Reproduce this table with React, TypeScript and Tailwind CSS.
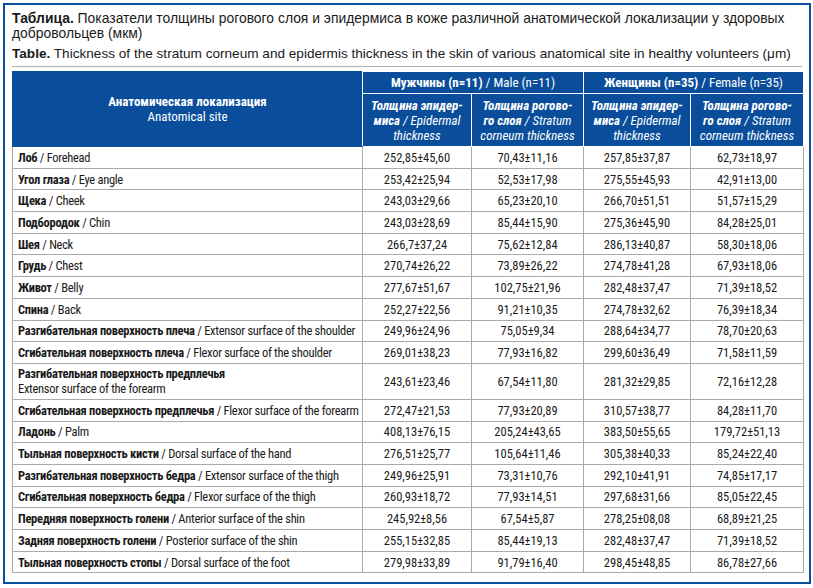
const rows: [string, string, string[]][] = [
  ['Лоб', 'Forehead', ['252,85±45,60', '70,43±11,16', '257,85±37,87', '62,73±18,97']],
  ['Угол глаза', 'Eye angle', ['253,42±25,94', '52,53±17,98', '275,55±45,93', '42,91±13,00']],
  ['Щека', 'Cheek', ['243,03±29,66', '65,23±20,10', '266,70±51,51', '51,57±15,29']],
  ['Подбородок', 'Chin', ['243,03±28,69', '85,44±15,90', '275,36±45,90', '84,28±25,01']],
  ['Шея', 'Neck', ['266,7±37,24', '75,62±12,84', '286,13±40,87', '58,30±18,06']],
  ['Грудь', 'Chest', ['270,74±26,22', '73,89±26,22', '274,78±41,28', '67,93±18,06']],
  ['Живот', 'Belly', ['277,67±51,67', '102,75±21,96', '282,48±37,47', '71,39±18,52']],
  ['Спина', 'Back', ['252,27±22,56', '91,21±10,35', '274,78±32,62', '76,39±18,34']],
  ['Разгибательная поверхность плеча', 'Extensor surface of the shoulder', ['249,96±24,96', '75,05±9,34', '288,64±34,77', '78,70±20,63']],
  ['Сгибательная поверхность плеча', 'Flexor surface of the shoulder', ['269,01±38,23', '77,93±16,82', '299,60±36,49', '71,58±11,59']],
  ['Разгибательная поверхность предплечья', 'Extensor surface of the forearm', ['243,61±23,46', '67,54±11,80', '281,32±29,85', '72,16±12,28']],
  ['Сгибательная поверхность предплечья', 'Flexor surface of the forearm', ['272,47±21,53', '77,93±20,89', '310,57±38,77', '84,28±11,70']],
  ['Ладонь', 'Palm', ['408,13±76,15', '205,24±43,65', '383,50±55,65', '179,72±51,13']],
  ['Тыльная поверхность кисти', 'Dorsal surface of the hand', ['276,51±25,77', '105,64±11,46', '305,38±40,33', '85,24±22,40']],
  ['Разгибательная поверхность бедра', 'Extensor surface of the thigh', ['249,96±25,91', '73,31±10,76', '292,10±41,91', '74,85±17,17']],
  ['Сгибательная поверхность бедра', 'Flexor surface of the thigh', ['260,93±18,72', '77,93±14,51', '297,68±31,66', '85,05±22,45']],
  ['Передняя поверхность голени', 'Anterior surface of the shin', ['245,92±8,56', '67,54±5,87', '278,25±08,08', '68,89±21,25']],
  ['Задняя поверхность голени', 'Posterior surface of the shin', ['255,15±32,85', '85,44±19,13', '282,48±37,47', '71,39±18,52']],
  ['Тыльная поверхность стопы', 'Dorsal surface of the foot', ['279,98±33,89', '91,79±16,40', '298,45±48,85', '86,78±27,66']],
];

const SubHead = ({ ru1, ru2, en1, en2 }: { ru1: string; ru2: string; en1: string; en2: string }) => (
  <th className="border border-white px-1 text-center align-middle text-[13px] font-normal italic leading-[15px]">
    <b>{ru1}</b>
    <br />
    <b>{ru2}</b> / {en1}
    <br />
    {en2}
  </th>
);

export default function App() {
  return (
    <div className="h-[588px] w-[813px] bg-white pl-[3px] pt-[3px]">
      <div className="h-[581px] w-[808px] border-2 border-[#0a4e9b] px-[7px] pt-[6px] text-[#1a1a1a]">
        <div className="border-b border-[#b0b0b0] pb-[5px] font-['Liberation_Sans',Arial,sans-serif] leading-[15px]">
          <p className="text-[13.9px]">
            <b>Таблица.</b> Показатели толщины рогового слоя и эпидермиса в коже различной анатомической локализации у здоровых
            добровольцев (мкм)
          </p>
          <p className="mt-[5px] text-[13.6px]">
            <b>Table.</b> Thickness of the stratum corneum and epidermis thickness in the skin of various anatomical site in healthy volunteers (μm)
          </p>
        </div>
        <table className="mt-[4px] w-[791px] table-fixed border-collapse font-['Roboto','Roboto_Condensed',sans-serif] [font-stretch:75%]">
          <colgroup>
            <col className="w-[350px]" />
            <col className="w-[109px]" />
            <col className="w-[112px]" />
            <col className="w-[107px]" />
            <col className="w-[113px]" />
          </colgroup>
          <thead className="bg-[#0a4e9b] text-white">
            <tr className="h-[22px]">
              <th rowSpan={2} className="border border-[#0a4e9b] border-r-white text-center text-[13px] font-normal leading-[15px]">
                <b>Анатомическая локализация</b>
                <br />
                Anatomical site
              </th>
              <th colSpan={2} className="border border-white text-[13px] font-normal">
                <b>Мужчины (n=11)</b> / Male (n=11)
              </th>
              <th colSpan={2} className="border border-white text-[13px] font-normal">
                <b>Женщины (n=35)</b> / Female (n=35)
              </th>
            </tr>
            <tr className="h-[53px]">
              <SubHead ru1="Толщина эпидер-" ru2="миса" en1="Epidermal" en2="thickness" />
              <SubHead ru1="Толщина рогово-" ru2="го слоя" en1="Stratum" en2="corneum thickness" />
              <SubHead ru1="Толщина эпидер-" ru2="миса" en1="Epidermal" en2="thickness" />
              <SubHead ru1="Толщина рогово-" ru2="го слоя" en1="Stratum" en2="corneum thickness" />
            </tr>
          </thead>
          <tbody className="text-[12.5px] leading-[15px]">
            {rows.map(([ru, en, vals], i) => {
              const twoLine = i === 10;
              return (
                <tr key={ru} className={twoLine ? 'h-[36px]' : 'h-[21.7px]'}>
                  <td className="whitespace-nowrap border border-[#aaaaaa] px-[5px] align-middle tracking-[-0.3px]">
                    <b>{ru}</b>
                    {twoLine ? <br /> : ' / '}
                    {en}
                  </td>
                  {vals.map((v, j) => (
                    <td key={j} className="border border-[#aaaaaa] text-center align-middle">
                      {v}
                    </td>
                  ))}
                </tr>
              );
            })}
          </tbody>
        </table>
      </div>
    </div>
  );
}
